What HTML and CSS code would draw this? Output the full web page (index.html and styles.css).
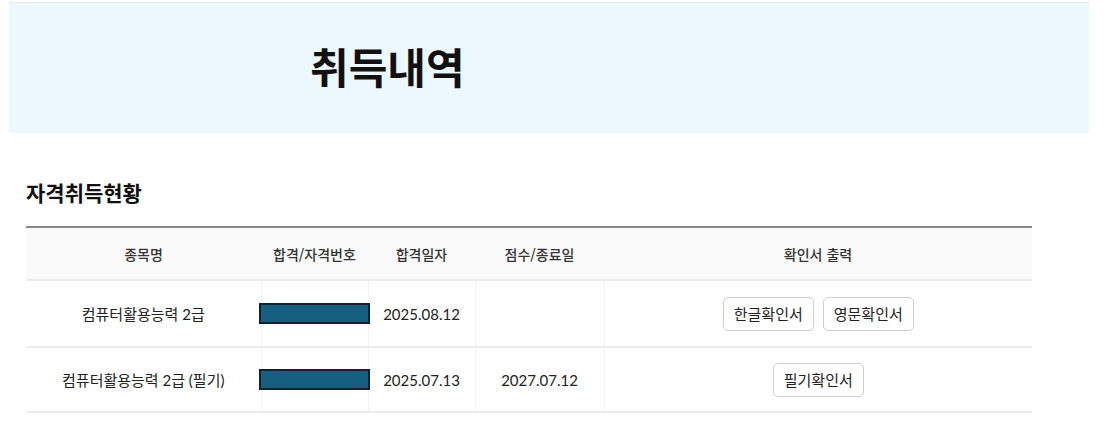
FILE: index.html
```html
<!DOCTYPE html>
<html lang="ko">
<head>
<meta charset="utf-8">
<title>취득내역</title>
<link rel="stylesheet" href="styles.css">
</head>
<body>
<header class="band">
  <h1 class="band-title">취득내역</h1>
</header>
<main class="content">
  <h2 class="section-title">자격취득현황</h2>
  <table class="grid">
    <colgroup>
      <col class="c-name">
      <col class="c-no">
      <col class="c-date">
      <col class="c-end">
      <col class="c-print">
    </colgroup>
    <thead>
      <tr>
        <th>종목명</th>
        <th>합격/자격번호</th>
        <th>합격일자</th>
        <th>점수/종료일</th>
        <th>확인서 출력</th>
      </tr>
    </thead>
    <tbody>
      <tr class="row-a">
        <td>컴퓨터활용능력 2급</td>
        <td class="cell-mask"><div class="mask-wrap"><span class="mask"></span></div></td>
        <td>2025.08.12</td>
        <td></td>
        <td class="cell-btns"><div class="btns"><button class="btn">한글확인서</button><button class="btn">영문확인서</button></div></td>
      </tr>
      <tr class="row-b">
        <td>컴퓨터활용능력 2급 (필기)</td>
        <td class="cell-mask"><div class="mask-wrap"><span class="mask"></span></div></td>
        <td>2025.07.13</td>
        <td>2027.07.12</td>
        <td class="cell-btns"><div class="btns"><button class="btn">필기확인서</button></div></td>
      </tr>
    </tbody>
  </table>
</main>
</body>
</html>
```

FILE: styles.css
```css
html, body {
  margin: 0;
  padding: 0;
  background: #ffffff;
}
body {
  font-family: Lato, "Noto Sans CJK KR", sans-serif;
  color: #222;
}
.band {
  margin: 2px 0 0 9px;
  width: 1080px;
  height: 130px;
  border-top: 1px solid #e8ecef;
  background: #edf7fe;
  display: flex;
  align-items: center;
}
.band-title {
  margin: 0 0 4px 301px;
  font-family: "Noto Sans CJK KR", sans-serif;
  font-size: 42px;
  font-weight: 700;
  color: #111;
  line-height: 1;
  letter-spacing: 0;
}
.content {
  padding-left: 26px;
}
.section-title {
  margin: 44px 0 19px 0;
  font-family: "Noto Sans CJK KR", sans-serif;
  font-size: 21px;
  font-weight: 700;
  line-height: 30px;
  color: #111;
}
.grid {
  width: 1006px;
  table-layout: fixed;
  border-collapse: collapse;
  border-top: 2px solid #888;
  font-size: 15px;
}
.c-name { width: 235px; }
.c-no { width: 107px; }
.c-date { width: 107px; }
.c-end { width: 129px; }
.c-print { width: 428px; }
.grid th {
  background: #fafafa;
  height: 51px;
  padding: 0;
  font-family: "Noto Sans CJK KR", sans-serif;
  font-weight: 500;
  font-size: 14px;
  color: #333;
  border-bottom: 2px solid #ececec;
  text-align: center;
}
.grid td {
  padding: 0;
  text-align: center;
  color: #222;
  border-bottom: 2px solid #ececec;
  border-right: 1px solid #f3f3f3;
}
.grid td:last-child {
  border-right: none;
}
.row-a td { height: 65px; }
.row-b td { height: 63px; }
.mask-wrap {
  display: flex;
  justify-content: center;
}
.mask {
  flex: none;
  display: block;
  width: 107px;
  height: 17px;
  background: #175f7f;
  border: 2px solid #0c2331;
}
.btns {
  display: flex;
  justify-content: center;
  gap: 9px;
}
.btn {
  font-family: "Noto Sans CJK KR", sans-serif;
  font-size: 15px;
  color: #222;
  background: #fff;
  border: 1px solid #cfcfcf;
  border-radius: 5px;
  height: 34px;
  padding: 0 10px;
  line-height: 1;
}
```
